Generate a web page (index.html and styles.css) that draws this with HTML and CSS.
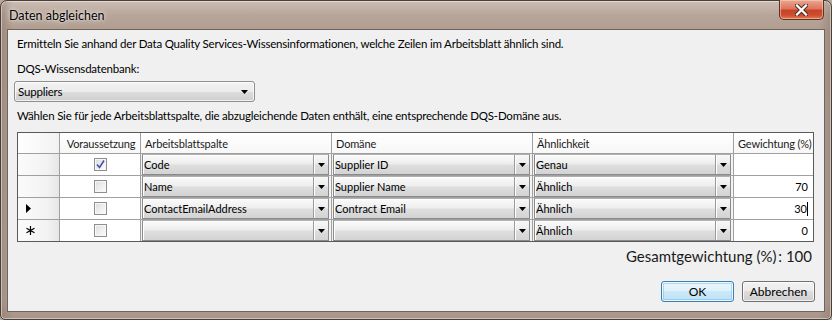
FILE: index.html
```html
<!DOCTYPE html>
<html lang="de">
<head>
<meta charset="utf-8">
<title>Daten abgleichen</title>
<link rel="stylesheet" href="styles.css">
</head>
<body>
<div class="window">
  <div class="titlebar">
    <span class="title">Daten abgleichen</span>
    <div class="close" aria-label="Schließen">
      <svg width="13" height="12" viewBox="0 0 13 12">
        <path d="M2 1.5 L11 10.5 M11 1.5 L2 10.5" stroke="#4a2a22" stroke-width="4.2" stroke-linecap="square" fill="none"/>
        <path d="M2 1.5 L11 10.5 M11 1.5 L2 10.5" stroke="#ffffff" stroke-width="2.3" stroke-linecap="square" fill="none"/>
      </svg>
    </div>
  </div>
  <div class="client">
    <p class="text intro">Ermitteln Sie anhand der Data Quality Services-Wissensinformationen, welche Zeilen im Arbeitsblatt ähnlich sind.</p>
    <p class="text label">DQS-Wissensdatenbank:</p>
    <div class="kbcombo">
      <span class="kbvalue">Suppliers</span>
      <svg class="tri" width="7" height="4" viewBox="0 0 7 4"><path d="M0 0 H7 L3.5 4 Z" fill="#000"/></svg>
    </div>
    <p class="text instr">Wählen Sie für jede Arbeitsblattspalte, die abzugleichende Daten enthält, eine entsprechende DQS-Domäne aus.</p>

    <div class="grid">
      <div class="hcell corner"></div>
      <div class="hcell center">Voraussetzung</div>
      <div class="hcell">Arbeitsblattspalte</div>
      <div class="hcell">Domäne</div>
      <div class="hcell">Ähnlichkeit</div>
      <div class="hcell">Gewichtung (%)</div>

      <div class="rowhead"></div>
      <div class="cell chk"><span class="checkbox checked"><svg width="11" height="11" viewBox="0 0 11 11"><path d="M2 5.5 L4.5 8.5 L9 1.5" stroke="#4356a0" stroke-width="1.6" fill="none"/></svg></span></div>
      <div class="cell cb"><div class="combo"><span class="val">Code</span><span class="btn-dd"><svg width="7" height="4" viewBox="0 0 7 4"><path d="M0 0 H7 L3.5 4 Z" fill="#000"/></svg></span></div></div>
      <div class="cell cb"><div class="combo"><span class="val">Supplier ID</span><span class="btn-dd"><svg width="7" height="4" viewBox="0 0 7 4"><path d="M0 0 H7 L3.5 4 Z" fill="#000"/></svg></span></div></div>
      <div class="cell cb"><div class="combo"><span class="val">Genau</span><span class="btn-dd"><svg width="7" height="4" viewBox="0 0 7 4"><path d="M0 0 H7 L3.5 4 Z" fill="#000"/></svg></span></div></div>
      <div class="cell num"></div>

      <div class="rowhead"></div>
      <div class="cell chk"><span class="checkbox"></span></div>
      <div class="cell cb"><div class="combo"><span class="val">Name</span><span class="btn-dd"><svg width="7" height="4" viewBox="0 0 7 4"><path d="M0 0 H7 L3.5 4 Z" fill="#000"/></svg></span></div></div>
      <div class="cell cb"><div class="combo"><span class="val">Supplier Name</span><span class="btn-dd"><svg width="7" height="4" viewBox="0 0 7 4"><path d="M0 0 H7 L3.5 4 Z" fill="#000"/></svg></span></div></div>
      <div class="cell cb"><div class="combo"><span class="val">Ähnlich</span><span class="btn-dd"><svg width="7" height="4" viewBox="0 0 7 4"><path d="M0 0 H7 L3.5 4 Z" fill="#000"/></svg></span></div></div>
      <div class="cell num">70</div>

      <div class="rowhead"><svg width="5" height="9" viewBox="0 0 5 9"><path d="M0 0 L5 4.5 L0 9 Z" fill="#000"/></svg></div>
      <div class="cell chk"><span class="checkbox"></span></div>
      <div class="cell cb"><div class="combo"><span class="val">ContactEmailAddress</span><span class="btn-dd"><svg width="7" height="4" viewBox="0 0 7 4"><path d="M0 0 H7 L3.5 4 Z" fill="#000"/></svg></span></div></div>
      <div class="cell cb"><div class="combo"><span class="val">Contract Email</span><span class="btn-dd"><svg width="7" height="4" viewBox="0 0 7 4"><path d="M0 0 H7 L3.5 4 Z" fill="#000"/></svg></span></div></div>
      <div class="cell cb"><div class="combo"><span class="val">Ähnlich</span><span class="btn-dd"><svg width="7" height="4" viewBox="0 0 7 4"><path d="M0 0 H7 L3.5 4 Z" fill="#000"/></svg></span></div></div>
      <div class="cell num"><span class="caret">30</span></div>

      <div class="rowhead"><svg width="9" height="9" viewBox="0 0 9 9"><path d="M4.5 0 V9 M0.5 2.2 L8.5 6.8 M8.5 2.2 L0.5 6.8" stroke="#000" stroke-width="1.2" fill="none"/></svg></div>
      <div class="cell chk"><span class="checkbox"></span></div>
      <div class="cell cb"><div class="combo"><span class="val"></span><span class="btn-dd"><svg width="7" height="4" viewBox="0 0 7 4"><path d="M0 0 H7 L3.5 4 Z" fill="#000"/></svg></span></div></div>
      <div class="cell cb"><div class="combo"><span class="val"></span><span class="btn-dd"><svg width="7" height="4" viewBox="0 0 7 4"><path d="M0 0 H7 L3.5 4 Z" fill="#000"/></svg></span></div></div>
      <div class="cell cb"><div class="combo"><span class="val">Ähnlich</span><span class="btn-dd"><svg width="7" height="4" viewBox="0 0 7 4"><path d="M0 0 H7 L3.5 4 Z" fill="#000"/></svg></span></div></div>
      <div class="cell num">0</div>
    </div>

    <div class="total">Gesamtgewichtung (%)&#8201;:&nbsp;100</div>

    <div class="buttons">
      <button class="button default">OK</button>
      <button class="button">Abbrechen</button>
    </div>
  </div>
</div>
</body>
</html>
```

FILE: styles.css
```css
* { box-sizing: border-box; }

html, body {
  margin: 0;
  padding: 0;
  width: 832px;
  height: 320px;
  overflow: hidden;
  background: #b8a89c;
}

.window {
  width: 832px;
  height: 320px;
  border: 1px solid #4a3f38;
  border-radius: 7px 7px 5px 5px;
  background:
    linear-gradient(to right, rgba(120,100,88,0.35), rgba(255,255,255,0) 12px, rgba(255,255,255,0) 818px, rgba(120,100,88,0.35)),
    linear-gradient(to bottom, #cbbdb3 0px, #b8a599 14px, #b19e91 29px, #b6a498 300px, #a69284 320px);
  box-shadow: inset 0 0 0 1px rgba(255,255,255,0.45);
  display: flex;
  flex-direction: column;
  font-family: Lato, "Open Sans", sans-serif;
  color: #000;
}

.titlebar {
  height: 28px;
  display: flex;
  align-items: flex-start;
  flex-shrink: 0;
}

.title {
  font-family: Lato, "Open Sans", sans-serif;
  font-size: 12.5px;
  line-height: 16px;
  padding: 7px 0 0 8px;
  color: #000;
  text-shadow: 0 0 6px rgba(255,255,255,0.9), 0 0 2px rgba(255,255,255,0.8);
}

.close {
  margin-left: auto;
  margin-right: 7px;
  margin-top: -1px;
  width: 45px;
  height: 20px;
  border: 1px solid #5a3027;
  border-top: none;
  border-radius: 0 0 5px 5px;
  background:
    linear-gradient(to bottom, #eba794 0%, #dc775d 45%, #c9422a 55%, #cc4e2e 80%, #e47c52 100%);
  box-shadow: inset 0 0 0 1px rgba(255,210,190,0.55);
  display: flex;
  align-items: center;
  justify-content: center;
}

.client {
  margin: 0 6px 7px 6px;
  height: 283px;
  background: #f0f0f0;
  border: 1px solid #6e645d;
  display: flex;
  flex-direction: column;
  align-items: flex-start;
}

.text {
  margin: 0;
  padding-left: 9px;
  font-size: 11.5px;
  letter-spacing: -0.2px;
  line-height: 15px;
  white-space: nowrap;
}

.intro { margin-top: 6px; }
.label { margin-top: 10px; }
.instr { margin-top: 6px; }

.kbcombo {
  margin: 5px 0 0 6px;
  width: 241px;
  height: 21px;
  border: 1px solid #8e8f8f;
  border-radius: 3px;
  background: linear-gradient(to bottom, #f2f2f2 0%, #ebebeb 50%, #dddddd 50%, #cfcfcf 100%);
  box-shadow: inset 0 0 0 1px rgba(255,255,255,0.7);
  display: flex;
  align-items: center;
  padding: 0 5px 0 3px;
  font-size: 11.5px;
  letter-spacing: -0.2px;
}

.kbvalue { flex: 1; }
.tri { margin-right: 1px; }

.grid {
  margin: 9px 0 0 9px;
  display: grid;
  grid-template-columns: 41px 80px 190px 200px 200px 79px;
  grid-template-rows: 20px 21px 21px 21px 21px;
  gap: 1px;
  background: #a0a0a0;
  border: 1px solid #5a5a5a;
  font-family: Lato, "Open Sans", sans-serif;
  font-size: 11px;
}

.hcell {
  background: linear-gradient(to bottom, #ffffff, #f7f7f7);
  display: flex;
  align-items: center;
  padding-left: 4px;
  letter-spacing: -0.15px;
  white-space: nowrap;
  overflow: hidden;
  color: #1a1a1a;
}
.hcell.center { justify-content: center; padding-left: 2px; }
.hcell.corner { background: linear-gradient(to right, #ffffff, #f2f2f2); }

.rowhead {
  background: linear-gradient(to right, #fbfbfb 0%, #f3f3f3 70%, #e6e6e6 100%);
  display: flex;
  align-items: center;
  padding-left: 8px;
}

.cell {
  background: #ffffff;
  display: flex;
  align-items: center;
}

.cell.chk { justify-content: center; }

.checkbox {
  width: 13px;
  height: 13px;
  border: 1px solid #8f8f8f;
  background: linear-gradient(135deg, #dcdcdc 0%, #f4f4f4 70%, #ffffff 100%);
  box-shadow: inset 0 0 0 1px #f7f7f7;
  display: flex;
  align-items: center;
  justify-content: center;
}

.cell.cb {
  background: #f3f3f3;
  padding: 0 2px 0 1px;
}

.combo {
  flex: 1;
  height: 21px;
  display: flex;
  align-items: stretch;
  border: 1px solid #8a8a8a;
  border-top-color: #b0b0b0;
  background: linear-gradient(to bottom, #fbfbfb 0%, #eeeeee 45%, #dedede 55%, #d3d3d3 100%);
  box-shadow: inset 1px 1px 0 #ffffff;
}

.val {
  flex: 1;
  display: flex;
  align-items: center;
  padding-left: 1px;
  white-space: nowrap;
  overflow: hidden;
}

.btn-dd {
  width: 15px;
  border-left: 1px solid #9a9a9a;
  box-shadow: inset 1px 0 0 #ffffff;
  display: flex;
  align-items: center;
  justify-content: center;
  background: linear-gradient(to bottom, #f8f8f8 0%, #ececec 45%, #dcdcdc 55%, #d4d4d4 100%);
}

.cell.num {
  justify-content: flex-end;
  padding-right: 5px;
}

.caret {
  border-right: 1px solid #000;
  line-height: 14px;
}

.total {
  align-self: flex-end;
  margin: 5px 12px 0 0;
  font-size: 15px;
  line-height: 18px;
  color: #1a1a1a;
  white-space: nowrap;
}

.buttons {
  align-self: flex-end;
  margin: 16px 9px 0 0;
  display: flex;
  gap: 8px;
}

.button {
  width: 73px;
  height: 21px;
  margin: 0;
  padding: 0;
  font-family: Lato, "Open Sans", sans-serif;
  font-size: 12px;
  color: #000;
  border: 1px solid #707070;
  border-radius: 3px;
  background: linear-gradient(to bottom, #f2f2f2 0%, #ebebeb 50%, #dddddd 50%, #cfcfcf 100%);
  box-shadow: inset 0 0 0 1px rgba(255,255,255,0.75);
}

.button.default {
  border-color: #3c7fb1;
  background: linear-gradient(to bottom, #eaf6fd 0%, #dff1fb 50%, #cbe8f8 50%, #bfe1f5 100%);
  box-shadow: inset 0 0 0 1px rgba(255,255,255,0.8), inset 0 0 0 2px rgba(72,170,220,0.35);
}
```
